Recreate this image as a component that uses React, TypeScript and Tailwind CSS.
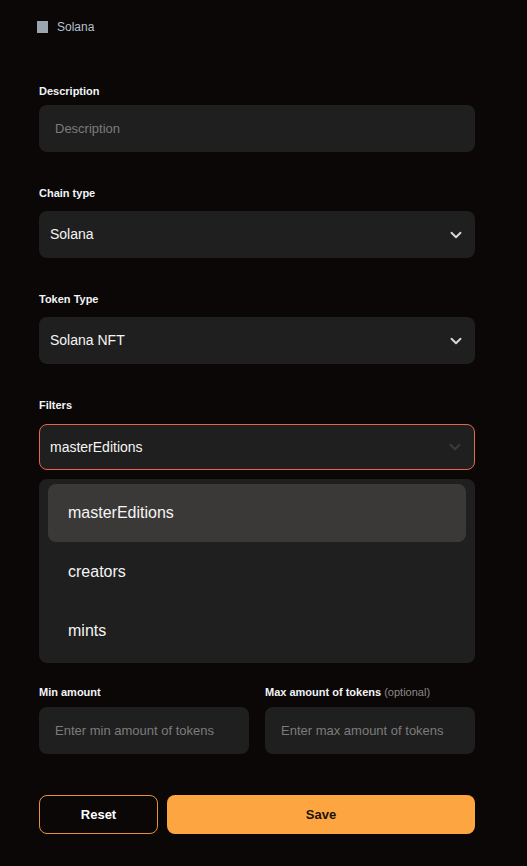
import { ChevronDown } from "lucide-react";

const font = { fontFamily: '"Liberation Sans", Arial, sans-serif' };

function Label({ children }: { children: React.ReactNode }) {
  return <div className="h-4 text-[11px] font-bold leading-4 text-[#f2f4f8]">{children}</div>;
}

function SelectBox({ value, active }: { value: string; active?: boolean }) {
  return (
    <div
      className={`flex items-center justify-between rounded-lg bg-[#1f1f1f] pr-[10px] ${
        active ? "h-[46px] border border-[#e4664f] pl-[10px]" : "h-[47px] pl-[11px]"
      }`}
    >
      <span className="text-[14px] text-[#f5f5f5]">{value}</span>
      <ChevronDown
        className={`h-[18px] w-[18px] ${active ? "text-[#3c3c3c]" : "text-[#d8d8d8]"}`}
        strokeWidth={2.5}
        aria-hidden
      />
    </div>
  );
}

export default function App() {
  const options = ["masterEditions", "creators", "mints"];

  return (
    <div className="min-h-[866px] w-full bg-[#0b0706] text-white" style={font}>
      <div className="px-[37px] pt-[21px]">
        <label className="flex items-center gap-[9px]">
          <span className="h-[12px] w-[11px] bg-[#9ba6b1]" />
          <span className="text-[12px] leading-3 text-[#b5c2cf]">Solana</span>
        </label>
      </div>

      <div className="pl-[39px]" style={{ width: 475 }}>
        <div className="mt-[50px]">
          <Label>Description</Label>
          <div className="mt-[6px] flex h-[47px] items-center rounded-lg bg-[#1f1f1f] pl-4">
            <span className="text-[13px] text-[#7c7c7c]">Description</span>
          </div>
        </div>

        <div className="mt-[33px]">
          <Label>Chain type</Label>
          <div className="mt-[10px]">
            <SelectBox value="Solana" />
          </div>
        </div>

        <div className="mt-[33px]">
          <Label>Token Type</Label>
          <div className="mt-[10px]">
            <SelectBox value="Solana NFT" />
          </div>
        </div>

        <div className="mt-[33px]">
          <Label>Filters</Label>
          <div className="mt-[11px]">
            <SelectBox value="masterEditions" active />
          </div>
          <div className="mt-[9px] rounded-lg bg-[#1f1f1f] px-[9px] pb-[3px] pt-[5px]">
            {options.map((option, i) => (
              <div
                key={option}
                className={`flex items-center rounded-lg pl-5 text-[16px] text-[#f5f5f5] ${
                  i === 0 ? "h-[58px] bg-[#3a3938]" : "h-[59px]"
                }`}
              >
                {option}
              </div>
            ))}
          </div>
        </div>

        <div className="mt-[21px] grid grid-cols-2 gap-4">
          <div>
            <Label>Min amount</Label>
            <div className="mt-[7px] flex h-[47px] items-center rounded-lg bg-[#1f1f1f] pl-4">
              <span className="text-[13px] text-[#7c7c7c]">Enter min amount of tokens</span>
            </div>
          </div>
          <div>
            <Label>
              Max amount of tokens{" "}
              <span className="font-normal text-[#8a8a8a]">(optional)</span>
            </Label>
            <div className="mt-[7px] flex h-[47px] items-center rounded-lg bg-[#1f1f1f] pl-4">
              <span className="text-[13px] text-[#7c7c7c]">Enter max amount of tokens</span>
            </div>
          </div>
        </div>

        <div className="mt-[41px] flex gap-[9px]">
          <button
            type="button"
            className="h-[39px] w-[119px] rounded-lg border border-[#e39239] text-[13px] font-bold text-white"
          >
            Reset
          </button>
          <button
            type="button"
            className="h-[39px] flex-1 rounded-lg bg-[#fda540] text-[13px] font-bold text-[#1a1208]"
          >
            Save
          </button>
        </div>
      </div>
    </div>
  );
}
